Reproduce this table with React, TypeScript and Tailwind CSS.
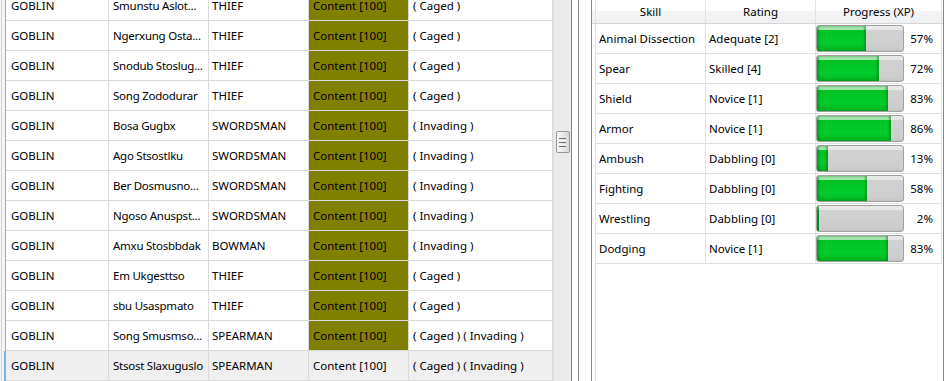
import React from "react";

type UnitRow = {
  race: string;
  name: string;
  profession: string;
  mood: string;
  flags: string;
};

type SkillRow = {
  skill: string;
  rating: string;
  progress: number;
};

const units: UnitRow[] = [
  { race: "GOBLIN", name: "Smunstu Aslot...", profession: "THIEF", mood: "Content [100]", flags: "( Caged )" },
  { race: "GOBLIN", name: "Ngerxung Osta...", profession: "THIEF", mood: "Content [100]", flags: "( Caged )" },
  { race: "GOBLIN", name: "Snodub Stoslug...", profession: "THIEF", mood: "Content [100]", flags: "( Caged )" },
  { race: "GOBLIN", name: "Song Zododurar", profession: "THIEF", mood: "Content [100]", flags: "( Caged )" },
  { race: "GOBLIN", name: "Bosa Gugbx", profession: "SWORDSMAN", mood: "Content [100]", flags: "( Invading )" },
  { race: "GOBLIN", name: "Ago Stsostlku", profession: "SWORDSMAN", mood: "Content [100]", flags: "( Invading )" },
  { race: "GOBLIN", name: "Ber Dosmusno...", profession: "SWORDSMAN", mood: "Content [100]", flags: "( Invading )" },
  { race: "GOBLIN", name: "Ngoso Anuspst...", profession: "SWORDSMAN", mood: "Content [100]", flags: "( Invading )" },
  { race: "GOBLIN", name: "Amxu Stosbbdak", profession: "BOWMAN", mood: "Content [100]", flags: "( Invading )" },
  { race: "GOBLIN", name: "Em Ukgesttso", profession: "THIEF", mood: "Content [100]", flags: "( Caged )" },
  { race: "GOBLIN", name: "sbu Usaspmato", profession: "THIEF", mood: "Content [100]", flags: "( Caged )" },
  { race: "GOBLIN", name: "Song Smusmso...", profession: "SPEARMAN", mood: "Content [100]", flags: "( Caged ) ( Invading )" },
  { race: "GOBLIN", name: "Stsost Slaxuguslo", profession: "SPEARMAN", mood: "Content [100]", flags: "( Caged ) ( Invading )" },
];

const skills: SkillRow[] = [
  { skill: "Animal Dissection", rating: "Adequate [2]", progress: 57 },
  { skill: "Spear", rating: "Skilled [4]", progress: 72 },
  { skill: "Shield", rating: "Novice [1]", progress: 83 },
  { skill: "Armor", rating: "Novice [1]", progress: 86 },
  { skill: "Ambush", rating: "Dabbling [0]", progress: 13 },
  { skill: "Fighting", rating: "Dabbling [0]", progress: 58 },
  { skill: "Wrestling", rating: "Dabbling [0]", progress: 2 },
  { skill: "Dodging", rating: "Novice [1]", progress: 83 },
];

const cell = "flex h-full shrink-0 items-center whitespace-nowrap overflow-hidden border-b border-r border-[#dadada]";

const UnitTable = () => {
  const selected = units.length - 1;
  return (
    <div className="h-full w-[553px] shrink-0 overflow-hidden">
      <div className="-mt-[9px]">
        {units.map((u, i) => {
          const isSel = i === selected;
          return (
            <div key={u.name} className={`flex h-[30px] ${isSel ? "bg-[#efefef]" : "bg-white"}`}>
              <div className="flex h-full w-[6px] shrink-0 border-r border-[#a9a9a9] bg-[#f4f4f4] pl-px">
                <div className="h-full w-px bg-[#d6d6d6]" />
                {isSel ? <div className="ml-[2px] h-full w-[2px] bg-[#6cb2e4]" /> : null}
              </div>
              <div className={`${cell} w-[103px] pl-[5px]`}>{u.race}</div>
              <div className={`${cell} w-[100px] pl-[4px] tracking-[-0.25px]`}>{u.name}</div>
              <div className={`${cell} w-[100px] pl-[3px]`}>{u.profession}</div>
              <div className={`${cell} w-[100px] pl-[4px] ${isSel ? "" : "bg-[#808000]"}`}>{u.mood}</div>
              <div className={`${cell} w-[144px] pl-[4px]`}>{u.flags}</div>
            </div>
          );
        })}
      </div>
    </div>
  );
};

const ScrollBar = () => (
  <div className="flex h-full w-[18px] shrink-0 flex-col items-center border-l border-[#e2e2e2] bg-[#ebebeb] pt-[131px]">
    <div className="flex h-[22px] w-[14px] flex-col items-center justify-center gap-[1px] rounded-[2px] border border-[#979797] bg-[linear-gradient(90deg,#f6f6f6,#e9e9e9_50%,#d6d6d6)]">
      <div className="h-px w-[7px] bg-[#6f6f6f]" />
      <div className="h-px w-[7px] bg-[#f8f8f8]" />
      <div className="h-px w-[7px] bg-[#6f6f6f]" />
      <div className="h-px w-[7px] bg-[#f8f8f8]" />
      <div className="h-px w-[7px] bg-[#6f6f6f]" />
    </div>
  </div>
);

const ProgressBar = ({ value }: { value: number }) => (
  <div className="h-[27px] w-[88px] shrink-0 overflow-hidden rounded-[3px] border border-[#a0a0a0] bg-[linear-gradient(#e9e9e9,#e6e6e6_16%,#d2d2d2_17%,#cdcdcd_88%,#c2c2c2)]">
    <div
      className="h-full bg-[linear-gradient(#a9e9b2,#9fe4a9_16%,#00c324_17%,#00cc2c_70%,#00b21e)] shadow-[inset_2px_0_2px_rgba(0,110,20,0.45),inset_-2px_0_2px_rgba(0,110,20,0.45)]"
      style={{ width: `${value}%` }}
    />
  </div>
);

const SkillTable = () => {
  const head = "flex h-full shrink-0 items-center justify-center border-r border-[#e3e3e3]";
  const row = "flex h-full shrink-0 items-center border-r border-b border-[#e0e0e0]";
  return (
    <div className="h-full w-[353px] shrink-0 border-l border-r border-[#828790] bg-white">
      <div className="flex h-[24px] border-b border-[#d5d5d5] bg-[linear-gradient(#ffffff,#ffffff_45%,#f3f4f6_50%,#eef0f2)]">
        <div className={`${head} w-[4px]`} />
        <div className={`${head} w-[110px]`}>Skill</div>
        <div className={`${head} w-[110px]`}>Rating</div>
        <div className={`${head} w-[126px]`}>Progress (XP)</div>
      </div>
      <div className="flex">
        <div className="h-[357px] w-[4px] shrink-0 border-r border-[#e0e0e0]" />
        <div>
          {skills.map((s) => (
            <div key={s.skill} className="flex h-[30px]">
              <div className={`${row} w-[110px] pl-[3px]`}>{s.skill}</div>
              <div className={`${row} w-[110px] pl-[3px]`}>{s.rating}</div>
              <div className={`${row} w-[126px]`}>
                <ProgressBar value={s.progress} />
                <span className="flex-1 pr-[8px] text-right">{s.progress}%</span>
              </div>
            </div>
          ))}
        </div>
      </div>
    </div>
  );
};

export default function App() {
  return (
    <div className="flex h-[381px] w-[944px] overflow-hidden bg-white font-['Noto_Sans',sans-serif] text-[11.5px] text-black">
      <div className="flex h-full w-[572px] shrink-0 border-r border-[#828790]">
        <UnitTable />
        <ScrollBar />
      </div>
      <div className="w-[6px] shrink-0" />
      <div className="h-full w-px shrink-0 bg-[#828790]" />
      <div className="w-[12px] shrink-0" />
      <SkillTable />
    </div>
  );
}
